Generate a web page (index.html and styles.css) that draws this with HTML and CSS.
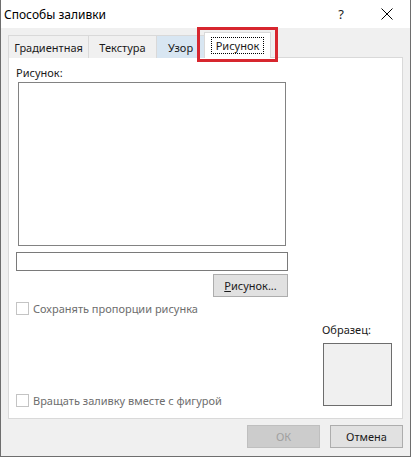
FILE: index.html
```html
<!DOCTYPE html>
<html lang="ru">
  <head>
    <meta charset="UTF-8" />
    <meta name="viewport" content="width=device-width, initial-scale=1.0" />
    <title>Способы заливки</title>
    <link rel="stylesheet" href="styles.css">
  </head>
  <body>
    <div class="window">
      <header class="titlebar">
        <span class="title">Способы заливки</span>
        <span class="help">?</span>
        <span class="close">
          <svg width="12" height="12" viewBox="0 0 12 12">
            <path d="M0.5 0.5 L11.5 11.5 M11.5 0.5 L0.5 11.5" stroke="#000" stroke-width="1" fill="none" />
          </svg>
        </span>
      </header>
      <div class="content">
        <nav class="tabs">
          <button class="tab tab-grad">Градиентная</button>
          <button class="tab tab-tex">Текстура</button>
          <button class="tab tab-pat hover">Узор</button>
          <button class="tab tab-pic active"><span class="focus">Рисунок</span></button>
        </nav>
        <section class="panel">
          <div class="left">
            <div class="label">Рисунок:</div>
            <div class="preview"></div>
            <div class="field"></div>
            <div class="btn-row">
              <button class="btn"><u>Р</u>исунок...</button>
            </div>
            <label class="check">
              <span class="box"></span>
              <span>Сохранять пропорции рисунка</span>
            </label>
          </div>
          <div class="bottom">
            <label class="check">
              <span class="box"></span>
              <span>Вращать заливку вместе с фигурой</span>
            </label>
            <div class="sample">
              <div class="label">Образец:</div>
              <div class="sample-box"></div>
            </div>
          </div>
        </section>
        <footer class="actions">
          <button class="btn btn-ok" disabled>ОК</button>
          <button class="btn">Отмена</button>
        </footer>
      </div>
    </div>
  </body>
</html>
```

FILE: styles.css
```css
body {
  margin: 0;
  padding: 0;
  font-family: "Noto Sans", "Liberation Sans", sans-serif;
  font-size: 11px;
  color: #1a1a1a;
}
.window {
  width: 409px;
  height: 456px;
  border: 1px solid #6e6e6e;
  border-top: none;
  background-color: #f0f0f0;
  display: flex;
  flex-direction: column;
}
.titlebar {
  height: 28px;
  background-color: #fff;
  display: flex;
  align-items: center;
  padding-left: 3px;
}
.title {
  font-size: 12px;
  flex: 1;
  color: #000;
}
.help {
  font-size: 13px;
  width: 46px;
  text-align: center;
}
.close {
  width: 46px;
  display: flex;
  justify-content: center;
}
.content {
  flex: 1;
  padding: 0 7px 8px 7px;
  display: flex;
  flex-direction: column;
}
.tabs {
  display: flex;
  align-items: flex-end;
  height: 29px;
  position: relative;
  z-index: 1;
}
.tab {
  font-family: inherit;
  font-size: 11px;
  height: 23px;
  margin: 0 0 -1px 0;
  padding: 0;
  border: 1px solid #d9d9d9;
  border-bottom: none;
  background-color: #f0f0f0;
  color: #1a1a1a;
}
.tab + .tab {
  border-left: none;
}
.tab-grad {
  width: 81px;
}
.tab-tex {
  width: 68px;
}
.tab-pat {
  width: 48px;
}
.tab.hover {
  background-color: #d8e6f2;
}
.tab.active {
  position: relative;
  width: 67px;
  height: 26px;
  margin-left: -1px;
  background-color: #fff;
  border-left: 1px solid #d9d9d9;
}
.tab.active::after {
  content: "";
  position: absolute;
  top: -6px;
  left: -8px;
  right: -8px;
  bottom: -4px;
  border: 3px solid #d7262e;
}
.focus {
  display: inline-block;
  padding: 0 4px;
  line-height: 15px;
  border: 1px dotted #000;
}
.panel {
  flex: 1;
  background-color: #fff;
  border: 1px solid #d9d9d9;
  padding: 7px 10px 12px 7px;
  display: flex;
  flex-direction: column;
}
.left {
  width: 272px;
  display: flex;
  flex-direction: column;
}
.label {
  line-height: 15px;
}
.preview {
  margin: 2px 0 0 2px;
  width: 266px;
  height: 162px;
  border: 1px solid #828282;
}
.field {
  margin-top: 6px;
  height: 17px;
  border: 1px solid #7a7a7a;
}
.btn-row {
  display: flex;
  justify-content: flex-end;
  margin-top: 3px;
}
.btn {
  font-family: inherit;
  font-size: 11px;
  width: 75px;
  height: 23px;
  padding: 0;
  border: 1px solid #adadad;
  background-color: #e1e1e1;
  color: #1a1a1a;
}
.check {
  display: flex;
  align-items: center;
  gap: 4px;
  color: #6d6d6d;
  line-height: 15px;
}
.left .check {
  margin-top: 4px;
}
.box {
  width: 11px;
  height: 11px;
  border: 1px solid #c4c4c4;
  background-color: #fff;
}
.bottom {
  flex: 1;
  display: flex;
  justify-content: space-between;
  align-items: flex-end;
}
.bottom .check {
  margin-bottom: -2px;
}
.sample {
  display: flex;
  flex-direction: column;
  align-items: flex-start;
}
.sample-box {
  margin: 6px 0 0 1px;
  width: 67px;
  height: 61px;
  border: 1px solid #6d6d6d;
  background-color: #f0f0f0;
}
.actions {
  display: flex;
  justify-content: flex-end;
  gap: 10px;
  margin-top: 6px;
}
.actions .btn {
  width: 73px;
}
.btn-ok {
  background-color: #cccccc;
  border-color: #bfbfbf;
  color: #a0a0a0;
}
```
